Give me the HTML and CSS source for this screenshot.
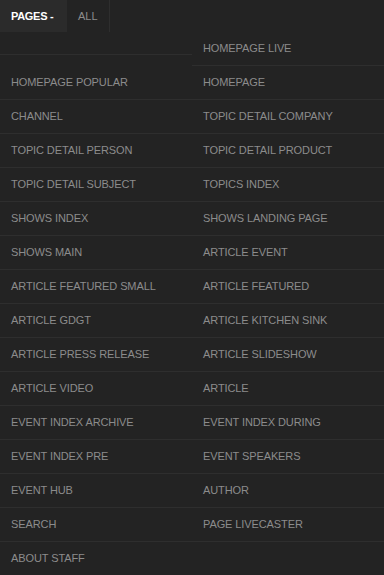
FILE: index.html
```html
<!DOCTYPE html>
<html lang="en">
<head>
  <meta charset="UTF-8">
  <meta name="viewport" content="width=device-width, initial-scale=1.0">
  <title>Pages</title>
  <link rel="stylesheet" href="styles.css">
</head>
<body>
  <div class="pages-menu">
    <div class="menu-tabs">
      <a class="menu-tab active" href="#">PAGES -</a>
      <a class="menu-tab" href="#">ALL</a>
    </div>

    <ul class="page-list">
      <li class="page-item spacer"></li>
      <li class="page-item"><a href="#">HOMEPAGE LIVE</a></li>
      <li class="page-item"><a href="#">HOMEPAGE POPULAR</a></li>
      <li class="page-item"><a href="#">HOMEPAGE</a></li>
      <li class="page-item"><a href="#">CHANNEL</a></li>
      <li class="page-item"><a href="#">TOPIC DETAIL COMPANY</a></li>
      <li class="page-item"><a href="#">TOPIC DETAIL PERSON</a></li>
      <li class="page-item"><a href="#">TOPIC DETAIL PRODUCT</a></li>
      <li class="page-item"><a href="#">TOPIC DETAIL SUBJECT</a></li>
      <li class="page-item"><a href="#">TOPICS INDEX</a></li>
      <li class="page-item"><a href="#">SHOWS INDEX</a></li>
      <li class="page-item"><a href="#">SHOWS LANDING PAGE</a></li>
      <li class="page-item"><a href="#">SHOWS MAIN</a></li>
      <li class="page-item"><a href="#">ARTICLE EVENT</a></li>
      <li class="page-item"><a href="#">ARTICLE FEATURED SMALL</a></li>
      <li class="page-item"><a href="#">ARTICLE FEATURED</a></li>
      <li class="page-item"><a href="#">ARTICLE GDGT</a></li>
      <li class="page-item"><a href="#">ARTICLE KITCHEN SINK</a></li>
      <li class="page-item"><a href="#">ARTICLE PRESS RELEASE</a></li>
      <li class="page-item"><a href="#">ARTICLE SLIDESHOW</a></li>
      <li class="page-item"><a href="#">ARTICLE VIDEO</a></li>
      <li class="page-item"><a href="#">ARTICLE</a></li>
      <li class="page-item"><a href="#">EVENT INDEX ARCHIVE</a></li>
      <li class="page-item"><a href="#">EVENT INDEX DURING</a></li>
      <li class="page-item"><a href="#">EVENT INDEX PRE</a></li>
      <li class="page-item"><a href="#">EVENT SPEAKERS</a></li>
      <li class="page-item"><a href="#">EVENT HUB</a></li>
      <li class="page-item"><a href="#">AUTHOR</a></li>
      <li class="page-item"><a href="#">SEARCH</a></li>
      <li class="page-item"><a href="#">PAGE LIVECASTER</a></li>
      <li class="page-item"><a href="#">ABOUT STAFF</a></li>
    </ul>
  </div>
</body>
</html>
```

FILE: styles.css
```css
* {
  margin: 0;
  padding: 0;
  box-sizing: border-box;
}

body {
  font-family: "Liberation Sans", Arial, sans-serif;
  background: #232323;
  color: #8c8c8c;
  min-height: 100vh;
}

.pages-menu {
  width: 100%;
}

.menu-tabs {
  display: flex;
  height: 32px;
}

.menu-tab {
  display: flex;
  align-items: center;
  height: 32px;
  font-size: 11px;
  color: #8c8c8c;
  text-decoration: none;
  padding: 0 11px 1px;
  border-right: 1px solid #2e2e2e;
}

.menu-tab.active {
  background: #2b2b2b;
  color: #fff;
  font-weight: 700;
  letter-spacing: -0.3px;
  width: 67px;
  border-right: none;
}

.page-list {
  list-style: none;
  display: grid;
  grid-template-columns: 1fr 1fr;
  align-items: start;
}

.page-item {
  height: 34px;
  border-bottom: 1px solid #2e2e2e;
}

.page-item.spacer {
  height: 23px;
}

.page-item a {
  display: flex;
  align-items: center;
  height: 33px;
  padding: 0 0 2px 11px;
  font-size: 11px;
  letter-spacing: -0.1px;
  color: #8c8c8c;
  text-decoration: none;
}
```
